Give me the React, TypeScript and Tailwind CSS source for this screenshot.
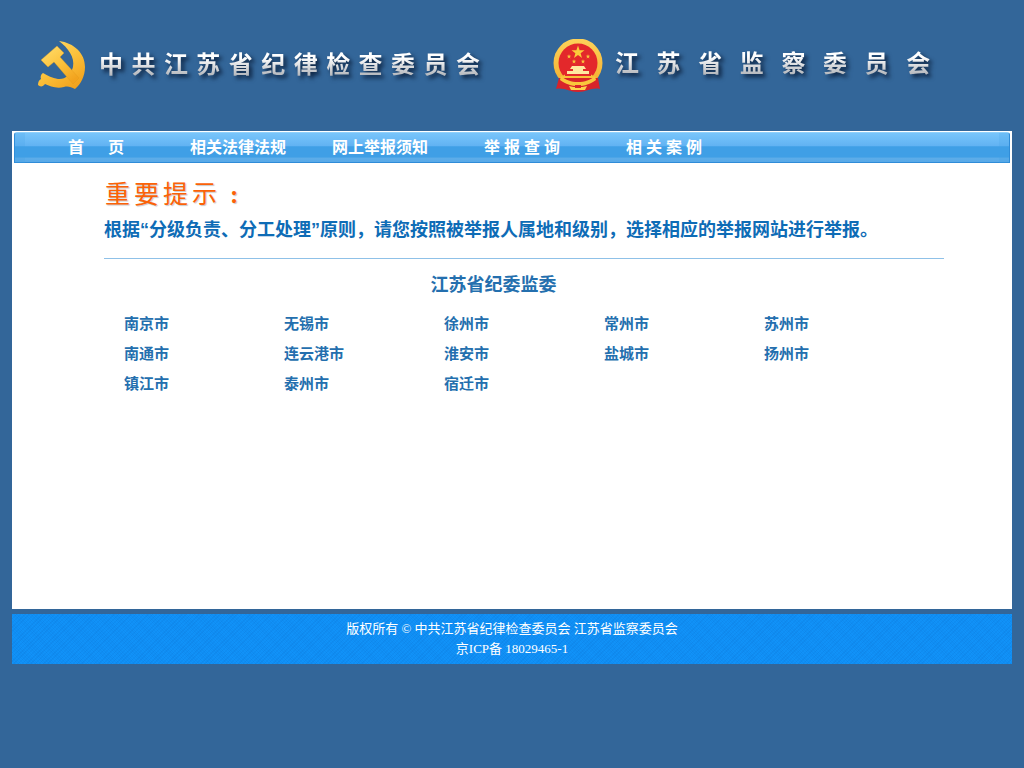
const Hammer = () => (
  <svg width="48" height="50" viewBox="0 0 48 50" className="shrink-0">
    <defs>
      <linearGradient id="g1" x1="0" y1="0" x2="0.7" y2="1">
        <stop offset="0" stopColor="#ffdf70" />
        <stop offset="0.55" stopColor="#fcc23c" />
        <stop offset="1" stopColor="#f2a31e" />
      </linearGradient>
    </defs>
    <path d="M21 1C36 3 47 13 47 27C47 36 43 44 37 49C33 47 30 46 26 47C18 49 12 46 7 44C5 47 2 47 0 45C0 42 1 40 3 39C2 37 3 34 5 33C10 36 14 38 20 39C27 40 33 34 35 27C37 17 30 8 21 1Z" fill="url(#g1)" />
    <path d="M3 20L19 6L26 13L22 17L41 38L35 44L16 22L10 27Z" fill="url(#g1)" stroke="#e09a1c" strokeWidth="0.4" />
  </svg>
);

const Emblem = () => (
  <svg width="50" height="54" viewBox="0 0 50 54" className="shrink-0">
    <defs>
      <linearGradient id="g2" x1="0" y1="0" x2="0" y2="1">
        <stop offset="0" stopColor="#fdd25a" />
        <stop offset="1" stopColor="#f3ad2b" />
      </linearGradient>
    </defs>
    <circle cx="25" cy="24" r="24.5" fill="url(#g2)" />
    <circle cx="25" cy="24" r="19.5" fill="#e3282b" />
    <polygon points="25,6.5 26.6,11.2 31.5,11.3 27.6,14.2 29,18.9 25,16.1 21,18.9 22.4,14.2 18.5,11.3 23.4,11.2" fill="#fbc93a" />
    <polygon points="16,15.2 16.6,16.8 18.2,16.8 16.9,17.8 17.4,19.4 16,18.4 14.6,19.4 15.1,17.8 13.8,16.8 15.4,16.8" fill="#f9c63c" />
    <polygon points="35,15.2 35.6,16.8 37.2,16.8 35.9,17.8 36.4,19.4 35,18.4 33.6,19.4 34.1,17.8 32.8,16.8 34.4,16.8" fill="#f9c63c" />
    <polygon points="21,20.2 21.6,21.8 23.2,21.8 21.9,22.8 22.4,24.4 21,23.4 19.6,24.4 20.1,22.8 18.8,21.8 20.4,21.8" fill="#f9c63c" />
    <polygon points="30,20.2 30.6,21.8 32.2,21.8 30.9,22.8 31.4,24.4 30,23.4 28.6,24.4 29.1,22.8 27.8,21.8 29.4,21.8" fill="#f9c63c" />
    <path d="M7 39C9 37 11 36 13 35H37C39 36 41 37 43 39L41 43H9Z" fill="#f8c23a" />
    <path d="M19 27H31L33 30H30V32H36V35H14V32H20V30H17Z" fill="#ffe9a0" />
    <path d="M12 35H38V37H12Z" fill="#e3282b" />
    <path d="M6 39H45L47 50C39 48 34 53 25 53C16 53 11 48 3 50Z" fill="#d8232a" />
    <path d="M8 37C13 41 18 43 25 43C32 43 37 41 42 37L43 41C37 45 32 47 25 47C18 47 13 45 7 41Z" fill="#f9c63c" />
    <path d="M16 47C19 48 22 48 25 48C28 48 31 48 34 47L32 51H18Z" fill="#fcd24c" />
    <path d="M22 46H28V49H22Z" fill="#d8232a" />
  </svg>
);

const cities = [
  ["南京市", "无锡市", "徐州市", "常州市", "苏州市"],
  ["南通市", "连云港市", "淮安市", "盐城市", "扬州市"],
  ["镇江市", "泰州市", "宿迁市"],
];

const nav = ["首\u00a0\u00a0\u00a0\u00a0\u00a0\u00a0页", "相关法律法规", "网上举报须知", "举 报 查 询", "相 关 案 例"];

const raised =
  "font-bold bg-gradient-to-b from-[#ffffff] from-30% to-[#969aa1] bg-clip-text text-transparent [filter:drop-shadow(3px_3px_2px_rgba(5,20,45,0.85))] whitespace-nowrap";

export default function App() {
  return (
    <div className="min-h-[768px] bg-[#336699] font-['Liberation_Serif','Noto_Sans_CJK_SC',serif]">
      <header className="h-[131px] flex items-start pt-[39px] pl-[38px]">
        <div className="w-[515px] flex items-start shrink-0">
          <div className="pt-px"><Hammer /></div>
          <div className={`ml-[13px] mt-[8px] text-[24px] leading-[36px] tracking-[8.45px] ${raised}`}>中共江苏省纪律检查委员会</div>
        </div>
        <div className="flex items-start">
          <Emblem />
          <div className={`ml-[12px] mt-[7px] text-[24px] leading-[36px] tracking-[17.6px] ${raised}`}>江苏省监察委员会</div>
        </div>
      </header>

      <div className="mx-3 w-[1000px]">
        <main className="h-[478px] bg-white pt-px">
          <nav className="mx-[2px] h-[31px] flex rounded-t-[3px] border-x border-t border-t-[#8fd0fb] border-x-[#2f8cd8] bg-[linear-gradient(180deg,#78c5fb_0%,#62b3f3_42%,#3f9fe6_46%,#3f9fe6_80%,#5dade9_84%,#58a9e8_97%,#2f8cd8_97%)]">
            <div className="w-[10px] shrink-0 bg-[#3f9fe6]/20" />
            {nav.map((n) => (
              <div key={n} className="w-[142px] pt-[4px] text-center text-[16px] leading-[22px] font-bold text-white whitespace-pre">{n}</div>
            ))}
            <div className="ml-auto w-[10px] shrink-0 bg-[#3f9fe6]/20" />
          </nav>
          <div className="pl-[92px]">
            <h1 className="pl-px pt-[15px] text-[25px] leading-[34px] font-normal tracking-[4px] whitespace-nowrap text-[#fb6207] [text-shadow:1px_1px_1px_rgba(120,120,120,0.4)]">重要提示<span className="ml-[9px] font-bold">:</span></h1>
            <p className="mt-[5px] font-['Liberation_Sans','Noto_Sans_CJK_SC',sans-serif] text-[18px] leading-[26px] font-bold text-[#0e6cb6] whitespace-nowrap">根据“分级负责、分工处理”原则，请您按照被举报人属地和级别，选择相应的举报网站进行举报。</p>
            <div className="mt-[15px] w-[840px] border-t border-[#8fc1e8]" />
            <h2 className="w-[779px] mt-[13px] text-center text-[18px] leading-[26px] font-bold text-[#246fae]">江苏省纪委监委</h2>
            <div className="mt-[11px] pl-5 grid grid-cols-[repeat(5,160px)] auto-rows-[30px]">
              {cities.flat().map((c) => (
                <div key={c} className="text-[15px] leading-[30px] font-bold text-[#246fae]">{c}</div>
              ))}
            </div>
          </div>
        </main>
        <footer className="mt-[5px] h-[50px] pt-[5px] text-center text-[13px] leading-[20px] text-white bg-[#1192f8] [background-image:repeating-linear-gradient(135deg,rgba(0,80,170,0.09)_0px,rgba(0,80,170,0.09)_1px,transparent_1px,transparent_3px),repeating-linear-gradient(45deg,rgba(0,80,170,0.07)_0px,rgba(0,80,170,0.07)_1px,transparent_1px,transparent_2px)]">
          <div>版权所有 © 中共江苏省纪律检查委员会 江苏省监察委员会</div>
          <div>京ICP备 18029465-1</div>
        </footer>
      </div>
    </div>
  );
}
